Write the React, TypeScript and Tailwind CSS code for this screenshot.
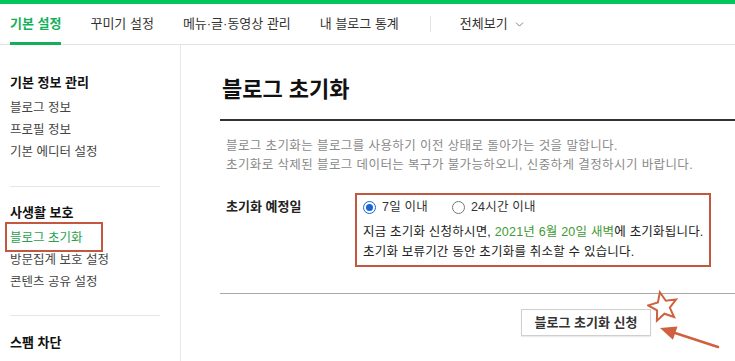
import { ChevronDown } from "lucide-react";

const font = { fontFamily: '"Liberation Sans", "Noto Sans CJK KR", sans-serif' };

const tabs = ["기본 설정", "꾸미기 설정", "메뉴·글·동영상 관리", "내 블로그 통계"];

const starPoints = (() => {
  const pts: string[] = [];
  for (let i = 0; i < 10; i++) {
    const r = i % 2 === 0 ? 15 : 6.8;
    const a = ((-90 - 12 + i * 36) * Math.PI) / 180;
    pts.push(`${(16 + r * Math.cos(a)).toFixed(1)},${(18 + r * Math.sin(a)).toFixed(1)}`);
  }
  return pts.join(" ");
})();

const SideGroup = ({ title, items, active }: { title: string; items: string[]; active?: string }) => (
  <div>
    <div className="text-[13px] leading-[22px] font-bold text-[#111]">{title}</div>
    <ul className="mt-[3px]">
      {items.map((item) => (
        <li
          key={item}
          className={`relative text-[12.5px] leading-[22px] ${item === active ? "text-[#2aa14f]" : "text-[#444]"}`}
        >
          {item}
          {item === active && (
            <span className="absolute left-[-5px] top-[-5px] w-[98px] h-[30px] border-2 border-[#c2583f]" />
          )}
        </li>
      ))}
    </ul>
  </div>
);

export default function App() {
  return (
    <div className="relative h-[361px] w-[735px] overflow-hidden bg-white" style={font}>
      <div className="h-[4px] bg-[#03c75a]" />
      <nav className="flex h-[41px] items-center gap-[29px] border-b border-[#e3e3e3] pl-[10px] text-[13px]">
        {tabs.map((t, i) => (
          <div key={t} className="relative flex h-full items-center">
            <span className={i === 0 ? "font-bold text-[#12b05a]" : "text-[#333]"}>{t}</span>
            {i === 0 && <span className="absolute bottom-[-1px] left-0 right-0 h-[3px] bg-[#12b05a]" />}
          </div>
        ))}
        <div className="ml-[2px] h-[16px] w-px bg-[#e3e3e3]" />
        <div className="flex items-center gap-[5px] text-[#333]">
          전체보기
          <ChevronDown className="h-[13px] w-[13px] text-[#666]" strokeWidth={1.5} />
        </div>
      </nav>

      <div className="flex">
        <aside className="h-[316px] w-[181px] shrink-0 border-r border-[#e8e8e8] px-[10px] pt-[27px]">
          <SideGroup title="기본 정보 관리" items={["블로그 정보", "프로필 정보", "기본 에디터 설정"]} />
          <div className="mt-[23px] h-px w-[150px] bg-[#e6e6e6]" />
          <div className="mt-[15px]">
            <SideGroup
              title="사생활 보호"
              items={["블로그 초기화", "방문집계 보호 설정", "콘텐츠 공유 설정"]}
              active="블로그 초기화"
            />
          </div>
          <div className="mt-[22px] h-px w-[150px] bg-[#e6e6e6]" />
          <div className="mt-[16px] text-[13px] leading-[22px] font-bold text-[#111]">스팸 차단</div>
        </aside>

        <main className="flex-1 pl-[39px] pt-[30px]">
          <h2 className="pl-[2px] text-[22px] leading-[30px] font-bold text-[#111]">블로그 초기화</h2>
          <div className="mt-[14px] h-[2px] bg-[#333]" />

          <div className="mt-[16px] pl-[6px] text-[12.5px] leading-[19px] tracking-[0.4px] text-[#8a8a8a]">
            <p>블로그 초기화는 블로그를 사용하기 이전 상태로 돌아가는 것을 말합니다.</p>
            <p>초기화로 삭제된 블로그 데이터는 복구가 불가능하오니, 신중하게 결정하시기 바랍니다.</p>
          </div>

          <div className="mt-[18px] flex items-start">
            <div className="mt-[4px] w-[135px] pl-[6px] text-[13px] leading-[20px] font-bold text-[#222]">
              초기화 예정일
            </div>
            <div className="h-[74px] w-[356px] border-2 border-[#c2583f] pl-[6px] pt-[2px] text-[12.5px] leading-[20px] tracking-[0.2px] text-[#222]">
              <div className="flex items-center">
                <span className="flex h-[13px] w-[13px] items-center justify-center rounded-full border border-[#1766d6] bg-white">
                  <span className="h-[7px] w-[7px] rounded-full bg-[#1766d6]" />
                </span>
                <span className="ml-[6px] text-[#333]">7일 이내</span>
                <span className="ml-[24px] h-[13px] w-[13px] rounded-full border border-[#777] bg-white" />
                <span className="ml-[6px] text-[#333]">24시간 이내</span>
              </div>
              <p className="mt-[5px]">
                지금 초기화 신청하시면, <span className="text-[#3f9a33]">2021년 6월 20일 새벽</span>에 초기화됩니다.
              </p>
              <p>초기화 보류기간 동안 초기화를 취소할 수 있습니다.</p>
            </div>
          </div>

          <div className="mt-[26px] h-px bg-[#a8a8a8]" />

          <button className="ml-[301px] mt-[15px] h-[27px] w-[130px] border border-[#cfcfcf] bg-white text-[13px] font-bold text-[#333] shadow-[0_1px_1px_rgba(0,0,0,0.08)]">
            블로그 초기화 신청
          </button>
        </main>
      </div>

      <svg className="absolute left-[647px] top-[289px]" width="32" height="36" viewBox="0 0 32 36">
        <polygon points={starPoints} fill="none" stroke="#d0613f" strokeWidth="2" strokeLinejoin="miter" />
      </svg>
      <svg className="absolute left-[656px] top-[319px]" width="66" height="32" viewBox="0 0 66 32">
        <line x1="62" y1="28" x2="16" y2="13" stroke="#d0613f" strokeWidth="2.5" strokeLinecap="round" />
        <polygon points="4,9 21.5,7.6 16.9,20.8" fill="#d0613f" />
      </svg>
    </div>
  );
}
